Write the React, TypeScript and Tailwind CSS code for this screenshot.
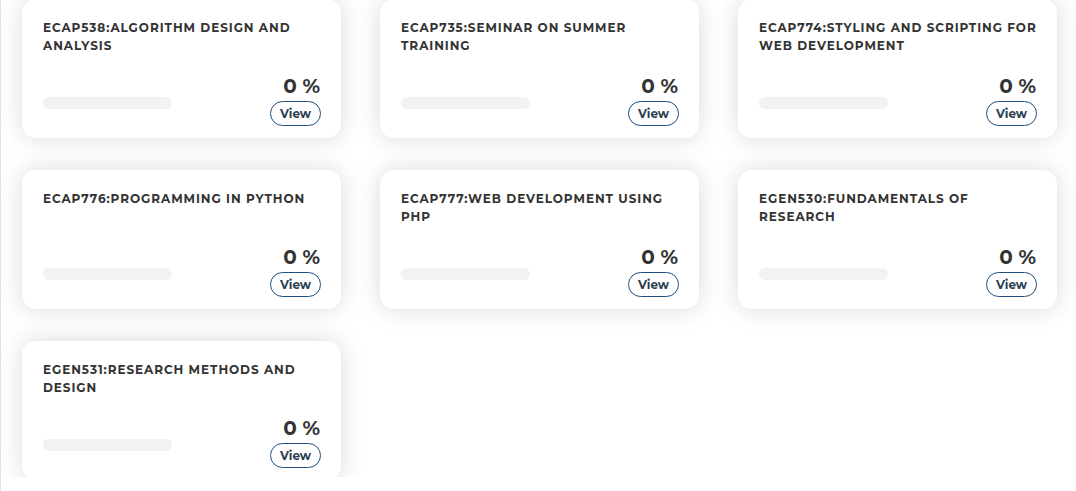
import React from "react";

const courses = [
  "ECAP538:ALGORITHM DESIGN AND ANALYSIS",
  "ECAP735:SEMINAR ON SUMMER TRAINING",
  "ECAP774:STYLING AND SCRIPTING FOR WEB DEVELOPMENT",
  "ECAP776:PROGRAMMING IN PYTHON",
  "ECAP777:WEB DEVELOPMENT USING PHP",
  "EGEN530:FUNDAMENTALS OF RESEARCH",
  "EGEN531:RESEARCH METHODS AND DESIGN",
];

function Card({ title }: { title: string }) {
  return (
    <div className="bg-white rounded-[14px] h-[139px] shadow-[0_0_24px_rgba(0,0,0,0.15)] pl-[21px] pr-[20px] pt-[20px] pb-[12px] flex flex-col">
      <div className="text-[12px] leading-[18px] font-bold tracking-[0.95px] text-[#333333]">
        {title}
      </div>
      <div className="mt-auto flex items-end justify-between">
        <div className="w-[129px] h-[12px] rounded-full bg-[#f2f2f2] mb-[17px]"></div>
        <div className="flex flex-col items-end">
          <div className="text-[20px] leading-[24px] font-bold text-[#333333] pr-px">0 %</div>
          <button className="mt-[3px] w-[51px] h-[25px] box-border rounded-full border border-[#1f4f7f] text-[12px] font-bold text-[#2c3e50] flex items-center justify-center">
            View
          </button>
        </div>
      </div>
    </div>
  );
}

export default function App() {
  return (
    <div className="w-[1076px] h-[491px] bg-white border-l border-[#e2e2e2] overflow-hidden" style={{ fontFamily: "Montserrat, 'Open Sans', 'Noto Sans', sans-serif" }}>
      <div className="h-[477px] overflow-hidden">
        <div className="grid grid-cols-3 gap-x-[39px] gap-y-[32px] pl-[21px] pr-[19px] -mt-px">
          {courses.map((c) => (
            <Card key={c} title={c} />
          ))}
        </div>
      </div>
    </div>
  );
}
